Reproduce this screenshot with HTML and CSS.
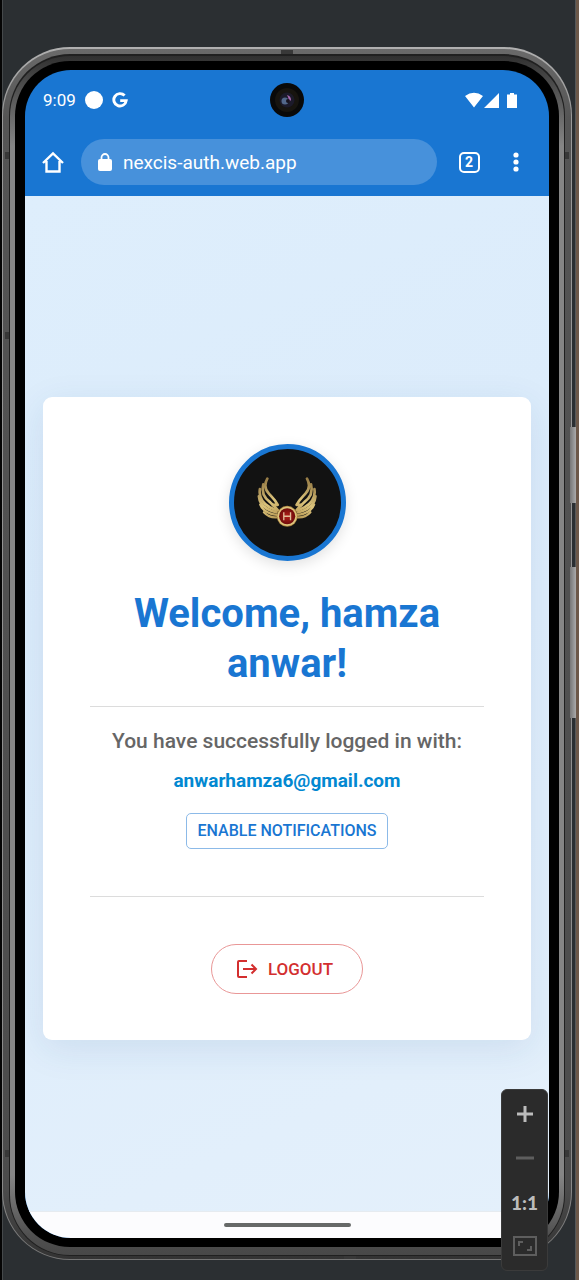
FILE: index.html
```html
<!DOCTYPE html>
<html lang="en">
<head>
<meta charset="utf-8">
<meta name="viewport" content="width=device-width, initial-scale=1">
<title>nexcis-auth.web.app</title>
<link rel="stylesheet" href="styles.css">
</head>
<body>
<div class="stage">
  <div class="device">
    <span class="side-key power"></span>
    <span class="side-key volume"></span>
    <div class="ring ring-a"><div class="ring ring-b"><div class="ring ring-c"><div class="ring ring-d"><div class="bezel">
      <div class="screen">
        <span class="camera"><svg viewBox="0 0 34 34" aria-hidden="true"><circle cx="17" cy="17" r="17" fill="#090909"/><circle cx="17" cy="17" r="12" fill="#17140f"/><circle cx="17" cy="17" r="7.500" fill="#1c1a2a"/><circle cx="15" cy="18" r="3.500" fill="#52678a"/><path d="M17 12q4 1 4 5l-2 2q0-4-2-7z" fill="#a868b0"/><circle cx="18" cy="18" r="2" fill="#17121e"/></svg></span>
        <header class="status">
          <time>9:09</time>
          <span class="dot"></span>
          <svg class="google" viewBox="0 0 16 16" aria-hidden="true"><path d="M12.600 3.600A6.200 6.200 0 1 0 14.200 8.600H8.200" fill="none" stroke="#fff" stroke-width="2.900"/></svg>
          <span class="spacer"></span>
          <svg class="signals" viewBox="0 0 52 16" aria-hidden="true"><path d="M0 4Q9-2.500 18 4L9 15.500zM34 1v15H19zM42 2.500h3V1h4v1.500h3V16H42z" fill="#fff"/></svg>
        </header>
        <nav class="browser">
          <button class="icon-btn" aria-label="Home"><svg viewBox="0 0 22 22" width="22" height="22"><path d="M1 12 11 2.500 21 12M4.500 10v10.500h13V10" fill="none" stroke="#fff" stroke-width="2.400"/></svg></button>
          <label class="address">
            <svg viewBox="0 0 14 18" width="14" height="18" aria-hidden="true"><rect y="6" width="14" height="12" rx="2" fill="#fff"/><path d="M3.500 7V4.500a3.500 3.500 0 0 1 7 0V7" fill="none" stroke="#fff" stroke-width="1.800"/></svg>
            <input type="text" value="nexcis-auth.web.app" aria-label="Address">
          </label>
          <button class="icon-btn tabs" aria-label="Open tabs"><span>2</span></button>
          <button class="icon-btn" aria-label="Menu"><svg viewBox="0 0 6 20" width="6" height="20"><circle cx="3" cy="3" r="2.600" fill="#fff"/><circle cx="3" cy="10" r="2.600" fill="#fff"/><circle cx="3" cy="17" r="2.600" fill="#fff"/></svg></button>
        </nav>
        <main class="page">
          <section class="card">
            <div class="avatar">
              <svg viewBox="51 43 318 318" role="img" aria-label="Winged H emblem">
                <defs>
                  <linearGradient id="gold" gradientUnits="userSpaceOnUse" x1="120" y1="140" x2="190" y2="250"><stop offset="0" stop-color="#8f7440"/><stop offset=".55" stop-color="#dcc47c"/><stop offset="1" stop-color="#b3934e"/></linearGradient>
                  <radialGradient id="ruby"><stop offset="0" stop-color="#b3201a"/><stop offset="1" stop-color="#6e0b0b"/></radialGradient>
                  <g id="wing" fill="none" stroke="url(#gold)" stroke-linecap="round" stroke-linejoin="round">
                    <path d="M150 131c-10 18-7 32 4 44 9 10 18 17 27 34l-14 0 14 16" stroke-width="8"/>
                    <path d="M138 148c-6 22 3 40 20 53l10 10" stroke-width="8"/>
                    <path d="M128 162c-4 26 9 43 29 54l18 8" stroke-width="8"/>
                    <path d="M125 184c2 24 18 39 52 47" stroke-width="8"/>
                    <path d="M129 208c8 19 23 28 49 31" stroke-width="7"/>
                    <path d="M140 231c11 12 23 17 40 15" stroke-width="7"/>
                  </g>
                </defs>
                <use href="#wing"/>
                <use href="#wing" transform="translate(418 0) scale(-1 1)"/>
                <circle cx="209" cy="243" r="31" fill="#a9823f"/>
                <circle cx="209" cy="243" r="29" fill="#dcc47c"/>
                <circle cx="209" cy="243" r="24" fill="url(#ruby)"/>
                <path d="M199 231v24M219 231v24M199 243h20" fill="none" stroke="#e0bd98" stroke-width="4"/>
              </svg>
            </div>
            <h1>Welcome, hamza anwar!</h1>
            <hr>
            <p class="lead">You have successfully logged in with:</p>
            <p class="email">anwarhamza6@gmail.com</p>
            <button class="enable">ENABLE NOTIFICATIONS</button>
            <hr class="second">
            <button class="logout">
              <svg viewBox="0 0 22 20" width="22" height="20" aria-hidden="true"><path d="M11 2H3q-1 0-1 1v14q0 1 1 1h8M7 10h13M15.500 5.500 20 10l-4.500 4.500" fill="none" stroke="currentColor" stroke-width="2"/></svg>
              <span>LOGOUT</span>
            </button>
          </section>
        </main>
        <footer class="gesture"><span></span></footer>
      </div>
    </div></div></div></div></div>
    <span class="band band-left-top"></span>
    <span class="band band-left-mid"></span>
    <span class="band band-left-bottom"></span>
    <span class="band band-right-top"></span>
    <span class="band band-right-bottom"></span>
    <span class="band band-top"></span>
    <span class="band band-bottom"></span>
  </div>
  <aside class="zoom-panel">
    <button aria-label="Zoom in"><svg viewBox="0 0 18 18" width="18" height="18"><path d="M9 1v16M1 9h16" stroke="#bcbcbc" stroke-width="3"/></svg></button>
    <button aria-label="Zoom out" disabled><svg viewBox="0 0 18 18" width="18" height="18"><path d="M0 9h18" stroke="#5e5e5e" stroke-width="3"/></svg></button>
    <button class="actual">1:1</button>
    <button aria-label="Zoom to fit" disabled><svg viewBox="0 0 24 20" width="24" height="20"><path d="M1 1h22v18H1z" fill="none" stroke="#5e5e5e" stroke-width="2"/><path d="M6 10V6h4M18 10v4h-4" fill="none" stroke="#5e5e5e" stroke-width="2"/></svg></button>
  </aside>
</div>
</body>
</html>
```
FILE: styles.css
```css
* { box-sizing: border-box; }
body { margin: 0; font-family: Roboto, "Liberation Sans", sans-serif; }
button, input { font: inherit; color: inherit; background: none; border: 0; padding: 0; margin: 0; }
h1, p, hr { margin: 0; }
svg { display: block; flex: none; }

.stage {
  position: relative;
  display: flex;
  min-height: 100vh;
  padding: 47px 4px 20px 0;
  border-left: 2px solid #050505;
  border-right: 3px solid #6c5849;
  background: linear-gradient(90deg, #45494b 1px, transparent 1px calc(100% - 1px), #54585a calc(100% - 1px)), #2b2f32;
}

.device { position: relative; flex: 1; display: flex; }
.ring { flex: 1; display: flex; }
.ring-a {
  padding: 2px 1px 1px;
  border-radius: 68px;
  background: linear-gradient(#b0b0b0, #999 60px, #888 calc(100% - 70px), #747474);
}
.ring-b {
  padding: 5px 6px 3px;
  border-radius: 67px;
  background: linear-gradient(#6a6a6a, #555 70px, #4c4c4c calc(100% - 70px), #333);
}
.ring-c {
  padding: 2px 1px 1px;
  border-radius: 61px;
  background: #202020;
}
.ring-d {
  padding: 5px 5px 8px;
  border-radius: 60px;
  background: linear-gradient(#303030, #444 20px, #858585 90px, #858585 calc(100% - 80px), #505050 calc(100% - 20px), #484848);
}
.bezel {
  flex: 1;
  display: flex;
  padding: 9px 10px 9px;
  border-radius: 55px;
  background: #000;
}
.screen {
  position: relative;
  flex: 1;
  display: flex;
  flex-direction: column;
  min-width: 0;
  overflow: hidden;
  border-radius: 46px;
  background: #1976d2;
}

.side-key {
  position: absolute;
  right: -4px;
  width: 6px;
  background: linear-gradient(90deg, #777, #aaa);
}
.power { top: 380px; height: 76px; }
.volume { top: 520px; height: 151px; }

.band { position: absolute; width: 4px; height: 7px; background: #383838; }
.band-left-top { left: 3px; top: 105px; }
.band-left-mid { left: 3px; top: 285px; }
.band-left-bottom { left: 3px; bottom: 103px; }
.band-right-top { right: 3px; top: 105px; }
.band-right-bottom { right: 3px; bottom: 103px; }
.band-top { left: 50%; top: 3px; width: 12px; height: 4px; margin-left: -6px; }
.band-bottom { left: 60%; bottom: 1px; width: 12px; height: 3px; }

.camera { position: absolute; top: 13px; left: 50%; width: 34px; margin-left: -17px; }

.status {
  display: flex;
  align-items: center;
  height: 60px;
  padding: 0 32px 0 18px;
  color: #fff;
  font-size: 17px;
}
.dot { width: 18px; height: 18px; margin: 0 9px 0 9px; border-radius: 50%; background: #fff; }
.google { width: 16px; height: 16px; }
.spacer { flex: 1; }
.signals { width: 52px; height: 16px; }

.browser {
  display: flex;
  align-items: center;
  height: 66px;
  padding: 0 17px 2px;
  color: #fff;
}
.icon-btn { display: grid; place-items: center; width: 32px; height: 40px; flex: none; }
.icon-btn:first-child { width: 22px; margin-right: 17px; }
.tabs { margin: 0 15px 0 16px; }
.tabs span {
  display: grid;
  place-items: center;
  width: 21px;
  height: 21px;
  border: 2px solid #fff;
  border-radius: 5px;
  font-size: 14px;
  font-weight: 700;
  line-height: 16px;
}
.address {
  flex: 1;
  display: flex;
  align-items: center;
  gap: 11px;
  min-width: 0;
  height: 46px;
  padding: 0 16px 0 17px;
  border-radius: 23px;
  background: #4791db;
}
.address input { flex: 1; min-width: 0; height: 28px; font-size: 19px; outline: 0; }

.page {
  flex: 1;
  display: flex;
  align-items: center;
  padding: 29px 18px 0;
  background: linear-gradient(155deg, #deeefc, #dcecfb 35%, #e4f0fb);
}
.card {
  flex: 1;
  display: flex;
  flex-direction: column;
  align-items: center;
  min-width: 0;
  padding: 47px 47px 46px;
  border-radius: 9px;
  background: #fff;
  box-shadow: 0 9px 36px rgba(31, 80, 140, 0.1);
  text-align: center;
}
.avatar {
  width: 117px;
  height: 117px;
  border: 5px solid #1976d2;
  border-radius: 50%;
  overflow: hidden;
  background: #121212;
  box-shadow: 0 4px 14px rgba(0, 0, 0, 0.12);
}
h1 { margin: 28px 0 17px; color: #1976d2; font-size: 40px; font-weight: 700; line-height: 50px; }
hr { width: 100%; border: 0; border-top: 1px solid #dcdcdc; }
.lead { margin-top: 20px; color: #666; font-size: 21px; font-weight: 500; line-height: 28px; }
.email { margin-top: 14px; color: #0288d1; font-size: 19px; font-weight: 700; line-height: 24px; }
.enable {
  height: 36px;
  margin-top: 20px;
  padding: 0 11px;
  border: 1px solid #8cbae8;
  border-radius: 5px;
  color: #1976d2;
  font-size: 16px;
  font-weight: 500;
}
.second { margin-top: 47px; }
.logout {
  display: flex;
  align-items: center;
  gap: 10px;
  height: 50px;
  margin-top: 47px;
  padding: 0 29px 0 24px;
  border: 1px solid #e99797;
  border-radius: 25px;
  color: #d32f2f;
  font-size: 17px;
  font-weight: 500;
}

.gesture {
  display: grid;
  place-items: center;
  height: 27px;
  border-top: 1px solid #e6ebf0;
  background: #fcfcfe;
}
.gesture span { width: 127px; height: 4px; border-radius: 2px; background: #666968; }

.zoom-panel {
  position: absolute;
  right: 28px;
  bottom: 9px;
  display: grid;
  grid-auto-rows: 44px;
  width: 47px;
  padding: 2px 0;
  border: 1px solid #3b3b3b;
  border-radius: 6px;
  background: #2b2b2b;
}
.zoom-panel button { display: grid; place-items: center; }
.actual { color: #bcbcbc; font-family: Lato, sans-serif; font-size: 19px; font-weight: 900; }
```
